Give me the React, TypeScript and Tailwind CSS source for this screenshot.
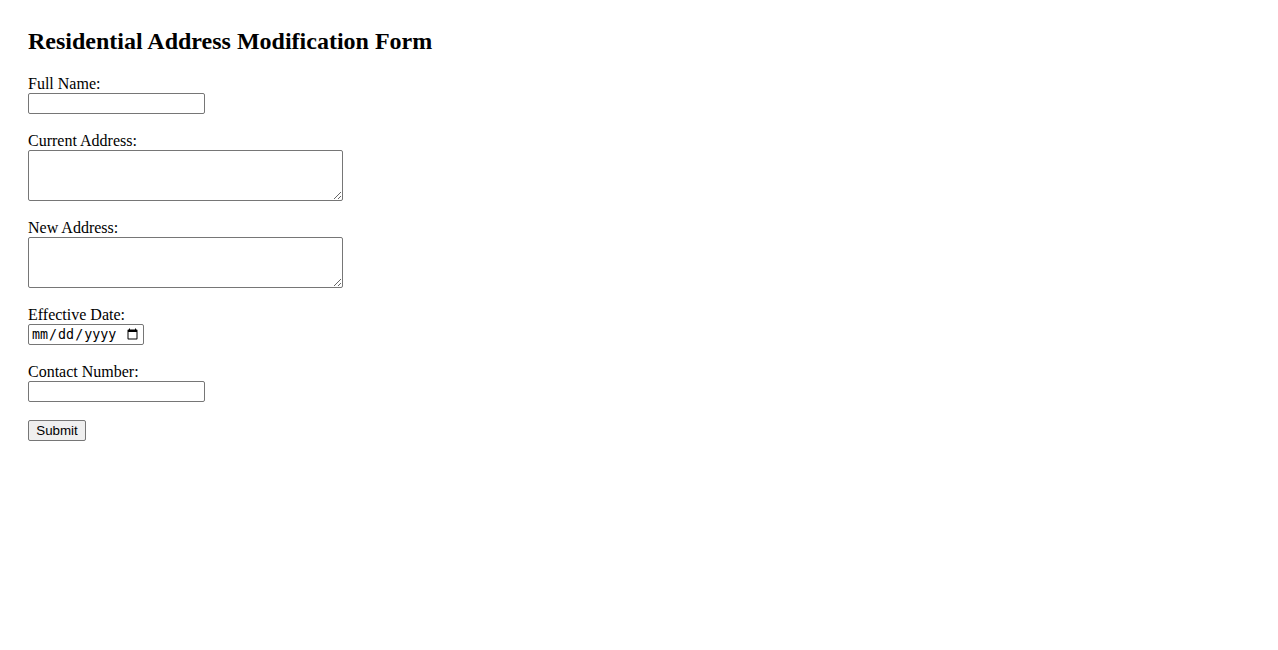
const fieldCls =
    "block h-[21px] w-[177px] border border-[#767676] rounded-[2px] bg-white px-[2px] py-[1px] text-[13.33px] font-['Liberation_Sans',sans-serif]";
const areaCls =
    "block h-[51px] w-[315px] border border-[#767676] rounded-[2px] bg-white p-[2px] text-[13.33px] leading-[15px] font-['DejaVu_Sans_Mono',monospace]";
const labelCls = "block h-[18px] text-[16px] leading-[18px]";

const App: React.FC = () => {
    return (
        <div className="min-h-[650px] bg-white px-[28px] pt-[28px] text-black font-['Liberation_Serif',serif]">
            <h2 className="mb-[20px] text-[24px] font-bold leading-[27px]">
                Residential Address Modification Form
            </h2>
            <form className="flex flex-col items-start" onSubmit={(e) => e.preventDefault()}>
                <div className="mb-[18px]">
                    <label htmlFor="fullName" className={labelCls}>
                        Full Name:
                    </label>
                    <input id="fullName" type="text" className={fieldCls} />
                </div>
                <div className="mb-[18px]">
                    <label htmlFor="currentAddress" className={labelCls}>
                        Current Address:
                    </label>
                    <textarea id="currentAddress" rows={3} className={areaCls} />
                </div>
                <div className="mb-[18px]">
                    <label htmlFor="newAddress" className={labelCls}>
                        New Address:
                    </label>
                    <textarea id="newAddress" rows={3} className={areaCls} />
                </div>
                <div className="mb-[18px]">
                    <label htmlFor="effectiveDate" className={labelCls}>
                        Effective Date:
                    </label>
                    <input
                        id="effectiveDate"
                        type="date"
                        className="block h-[21px] w-[116px] border border-[#767676] rounded-[2px] bg-white px-[2px] py-0 text-[13.33px] leading-[17px] font-['DejaVu_Sans_Mono',monospace]"
                    />
                </div>
                <div className="mb-[18px]">
                    <label htmlFor="contactNumber" className={labelCls}>
                        Contact Number:
                    </label>
                    <input id="contactNumber" type="tel" className={fieldCls} />
                </div>
                <button
                    type="submit"
                    className="h-[21px] w-[58px] border border-[#767676] rounded-[2px] bg-[#efefef] text-[13.33px] leading-[17px] text-black font-['Liberation_Sans',sans-serif]"
                >
                    Submit
                </button>
            </form>
        </div>
    );
};

export default App;
